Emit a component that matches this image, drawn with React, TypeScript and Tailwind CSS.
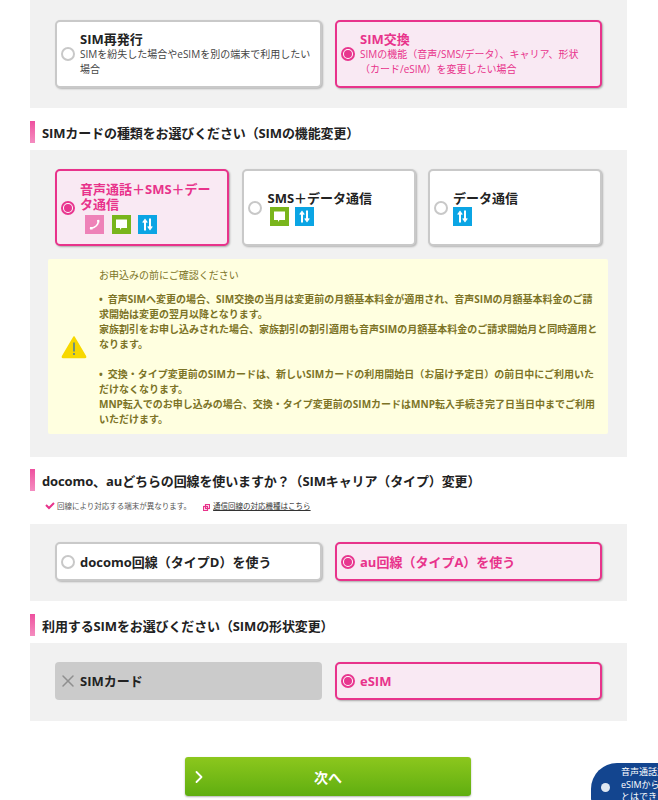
import type { ReactNode } from 'react'
import { X, ChevronRight } from 'lucide-react'

const FONT = "font-['Open_Sans','Noto_Sans_CJK_JP',sans-serif]"

function Radio({ on }: { on?: boolean }) {
  if (on) {
    return (
      <span className="w-[14px] h-[14px] shrink-0 rounded-full border-2 border-[#e8368f] bg-white flex items-center justify-center">
        <span className="w-[8px] h-[8px] rounded-full bg-[#e8368f]" />
      </span>
    )
  }
  return <span className="w-[14px] h-[14px] shrink-0 rounded-full border-2 border-[#c8c8c8] bg-white" />
}

function Card({ on, className, children }: { on?: boolean; className: string; children: ReactNode }) {
  return (
    <div
      className={
        on
          ? `flex items-center gap-[5px] pl-[4px] pr-[8px] rounded-[5px] border-2 border-[#e8338b] bg-[#f9e9f3] shadow-[1px_1px_2px_rgba(0,0,0,0.3)] ${className}`
          : `flex items-center gap-[5px] pl-[4px] pr-[8px] rounded-[5px] border-2 border-[#c9c9c9] bg-white shadow-[1px_1px_2px_rgba(0,0,0,0.25)] ${className}`
      }
    >
      <Radio on={on} />
      <div className="min-w-0">{children}</div>
    </div>
  )
}

function Heading({ children }: { children: ReactNode }) {
  return (
    <div className="flex items-center h-[22px] gap-[7px]">
      <span className="w-[5px] h-[22px] bg-gradient-to-b from-[#ee4f9f] to-[#f48cc0]" />
      <h2 className="text-[13px] leading-[20px] pt-[2px] font-bold text-[#222] tracking-[-0.12px]">{children}</h2>
    </div>
  )
}

function PhoneIcon() {
  return (
    <span className="w-[19px] h-[19px] bg-[#ee82b8] flex items-center justify-center">
      <svg width="13" height="13" viewBox="0 0 13 13" fill="none">
        <path d="M10.3 2.5C10.6 6.5 7.5 10 2.5 10.3" stroke="#fff" strokeWidth="1.5" strokeLinecap="round" />
        <path d="M9 2h2.4v2.6H9.6zM2 9h2.6v2.4H2z" fill="#fff" />
      </svg>
    </span>
  )
}

function SmsIcon() {
  return (
    <span className="w-[19px] h-[19px] bg-[#79b51c] flex items-center justify-center">
      <svg width="13" height="13" viewBox="0 0 13 13">
        <path d="M1 1.5h11v8.5H6.5l-1.5 2v-2H1z" fill="#fff" />
      </svg>
    </span>
  )
}

function DataIcon() {
  return (
    <span className="w-[19px] h-[19px] bg-[#0ba5e4] flex items-center justify-center">
      <svg width="13" height="13" viewBox="0 0 13 13" fill="none" stroke="#fff" strokeWidth="2">
        <path d="M4 12.5V3" />
        <path d="M9 .5V10" />
        <path d="M1.7 4.5 4 1.5l2.3 3" strokeWidth="1.2" fill="#fff" />
        <path d="M6.7 8.5 9 11.5l2.3-3" strokeWidth="1.2" fill="#fff" />
      </svg>
    </span>
  )
}

export default function App() {
  return (
    <div className={`w-[658px] h-[800px] overflow-hidden bg-white relative ${FONT}`}>
      <div className="ml-[30px] w-[597px]">
        {/* SIM手続き */}
        <section className="bg-[#f1f1f1] h-[108px] pt-[20px] px-[25px] flex gap-[13px] items-start">
          <Card className="w-[267px] h-[68px]">
            <p className="text-[13px] leading-[15px] pt-[1px] font-bold text-[#222]">SIM再発行</p>
            <p className="text-[10px] leading-[15px] text-[#444]">SIMを紛失した場合やeSIMを別の端末で利用したい場合</p>
          </Card>
          <Card on className="w-[267px] h-[68px]">
            <p className="text-[13px] leading-[15px] pt-[1px] font-bold text-[#e8338b]">SIM交換</p>
            <p className="text-[10px] leading-[15px] text-[#e8338b]">SIMの機能（音声/SMS/データ）、キャリア、形状（カード/eSIM）を変更したい場合</p>
          </Card>
        </section>

        <div className="mt-[13px]">
          <Heading>SIMカードの種類をお選びください（SIMの機能変更）</Heading>
        </div>

        <section className="mt-[7px] bg-[#f1f1f1] h-[307px] pt-[19px]">
          <div className="px-[25px] flex gap-[12.5px]">
            <Card on className="w-[174px] h-[77px]">
              <p className="text-[13px] leading-[15px] pt-[1px] font-bold text-[#e8338b]">音声通話＋SMS＋データ通信</p>
              <div className="flex gap-[7.5px] ml-[5px] mt-[3px]">
                <PhoneIcon />
                <SmsIcon />
                <DataIcon />
              </div>
            </Card>
            <Card className="w-[174px] h-[77px]">
              <p className="text-[13px] leading-[15px] pt-[1px] ml-[1px] font-bold text-[#222]">SMS＋データ通信</p>
              <div className="flex gap-[6px] ml-[3px] mt-[1px]">
                <SmsIcon />
                <DataIcon />
              </div>
            </Card>
            <Card className="w-[174px] h-[77px]">
              <p className="text-[13px] leading-[15px] pt-[1px] font-bold text-[#222]">データ通信</p>
              <div className="flex mt-[1px]">
                <DataIcon />
              </div>
            </Card>
          </div>

          <div className="mt-[13px] ml-[18px] w-[560px] h-[175px] bg-[#ffffe0] rounded-[2px] flex items-center">
            <div className="w-[51px] shrink-0 flex justify-center pl-[1px]">
              <svg width="26" height="24" viewBox="0 0 26 24">
                <path d="M13 2 24.5 21.5a.6.6 0 0 1-.5 1H2a.6.6 0 0 1-.5-1z" fill="#f7d800" stroke="#f7d800" strokeWidth="1.5" strokeLinejoin="round" />
                <path d="M13 7.5v9" stroke="#2a6cc0" strokeWidth="1.3" />
                <circle cx="13" cy="19" r="0.9" fill="#2a6cc0" />
              </svg>
            </div>
            <div className="text-[10px] leading-[15px] text-[#7c7326] pr-[8px] pt-[2px]">
              <p className="mb-[9px] font-normal">お申込みの前にご確認ください</p>
              <p className="font-bold">{'•\u2002'}音声SIMへ変更の場合、SIM交換の当月は変更前の月額基本料金が適用され、音声SIMの月額基本料金のご請求開始は変更の翌月以降となります。</p>
              <p className="font-bold">家族割引をお申し込みされた場合、家族割引の割引適用も音声SIMの月額基本料金のご請求開始月と同時適用となります。</p>
              <p className="font-bold mt-[15px]">{'•\u2002'}交換・タイプ変更前のSIMカードは、新しいSIMカードの利用開始日（お届け予定日）の前日中にご利用いただけなくなります。</p>
              <p className="font-bold">MNP転入でのお申し込みの場合、交換・タイプ変更前のSIMカードはMNP転入手続き完了日当日中までご利用いただけます。</p>
            </div>
          </div>
        </section>

        <div className="mt-[12px]">
          <Heading>docomo、auどちらの回線を使いますか？（SIMキャリア（タイプ）変更）</Heading>
        </div>

        <div className="flex items-center h-[14px] mt-[9px] ml-[15px] text-[7.5px] text-[#555]">
          <svg width="10" height="8" viewBox="0 0 10 8" fill="none" className="mr-[2px] -mt-[3px]">
            <path d="M1 3l3 3 5-5" stroke="#e8338b" strokeWidth="2" />
          </svg>
          <span>回線により対応する端末が異なります。</span>
          <svg width="7" height="7" viewBox="0 0 7 7" fill="none" className="ml-[12px] mr-[3px]" stroke="#e8338b" strokeWidth="1.2">
            <rect x="2.5" y="0.5" width="4" height="4" />
            <rect x="0.5" y="2.5" width="4" height="4" />
          </svg>
          <span className="underline text-[#333]">通信回線の対応機種はこちら</span>
        </div>

        <section className="mt-[10px] bg-[#f1f1f1] h-[77px] pt-[18px] px-[25px] flex gap-[13px] items-start">
          <Card className="w-[267px] h-[39px]">
            <p className="text-[13px] leading-[15px] pt-[1px] font-bold text-[#222]">docomo回線（タイプD）を使う</p>
          </Card>
          <Card on className="w-[267px] h-[39px]">
            <p className="text-[13px] leading-[15px] pt-[1px] font-bold text-[#e8338b]">au回線（タイプA）を使う</p>
          </Card>
        </section>

        <div className="mt-[13px]">
          <Heading>利用するSIMをお選びください（SIMの形状変更）</Heading>
        </div>

        <section className="mt-[7px] bg-[#f1f1f1] h-[78px] pt-[19px] px-[25px] flex gap-[13px] items-start">
          <div className="w-[267px] h-[38px] rounded-[4px] bg-[#cbcbcb] flex items-center gap-[2px] pl-[3px]">
            <X size={20} strokeWidth={1.8} className="text-[#8f8f8f]" />
            <p className="text-[13px] font-bold text-[#222] pt-[1px]">SIMカード</p>
          </div>
          <Card on className="w-[267px] h-[38px]">
            <p className="text-[13px] leading-[15px] pt-[1px] font-bold text-[#e8338b]">eSIM</p>
          </Card>
        </section>

        <div className="mt-[36px] ml-[155px] w-[286px] h-[39px] rounded-[3px] bg-gradient-to-b from-[#8cc71d] to-[#5fae10] shadow-[0_1px_2px_rgba(0,0,0,0.3)] flex items-center relative">
          <ChevronRight size={20} strokeWidth={2.2} className="text-white ml-[4px]" />
          <span className="absolute inset-0 flex items-center justify-center text-[14px] font-bold text-white pt-[2px]">次へ</span>
        </div>
      </div>

      <div className="absolute left-[591px] top-[763px] w-[120px] h-[60px] rounded-[26px] bg-[#13458f] flex items-start gap-[11px] pl-[10px] pt-[3px]">
        <span className="w-[9px] h-[9px] rounded-full bg-[#dfe7f2] mt-[17px] shrink-0" />
        <p className="text-[9px] leading-[12.5px] text-white whitespace-nowrap">音声通話対応<br />eSIMから<br />とはできま</p>
      </div>
    </div>
  )
}
